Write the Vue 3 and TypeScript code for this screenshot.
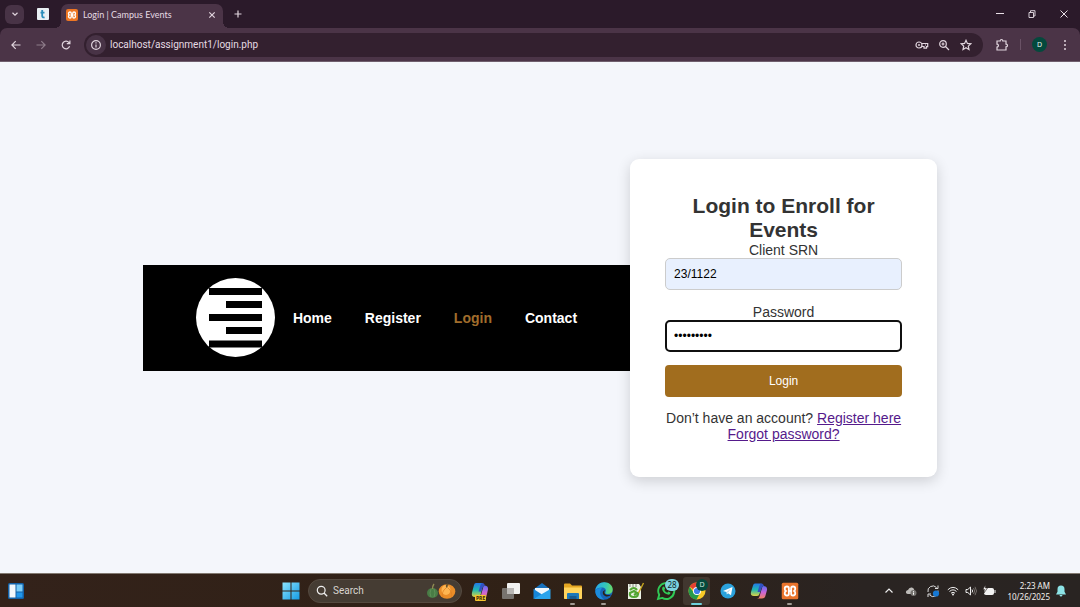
<script setup lang="ts">
import { ref } from 'vue'

interface NavItem {
  label: string
  active?: boolean
}

const navItems: NavItem[] = [
  { label: 'Home' },
  { label: 'Register' },
  { label: 'Login', active: true },
  { label: 'Contact' },
]

const address = ref('localhost/assignment1/login.php')
const srn = ref('23/1122')
const password = ref('campus123')
</script>

<template>
  <div class="screen">
    <header class="browser">
      <div class="tabstrip">
        <button class="tab-search" type="button" aria-label="Search tabs">
          <svg width="8" height="8" viewBox="0 0 8 8"><path d="M1.500 2.800 4 5.200 6.500 2.800" class="line" /></svg>
        </button>
        <button class="pinned" type="button" aria-label="Pinned tab">
          <svg width="12" height="12" viewBox="0 0 12 12">
            <rect width="12" height="12" rx="1" fill="#e9f0f4" />
            <path d="M5.200 2v6q0 1.800 2.400 1.300M3.500 4.600h4" fill="none" stroke="#2b8dbb" stroke-width="1.800" />
          </svg>
        </button>
        <div class="tab">
          <svg width="12" height="12" viewBox="0 0 24 24">
            <rect width="24" height="24" rx="4" fill="#ee7623" />
            <path d="M10.500 12V8.500Q10.500 6 8 6 5 6 5 9q0 2 1.500 3Q5 13 5 15q0 3 3 3 2.500 0 2.500-2.500zh3M13.500 12V8.500Q13.500 6 16 6q3 0 3 3 0 2-1.500 3 1.500 1 1.500 3 0 3-3 3-2.500 0-2.500-2.500z" fill="none" stroke="#fff" stroke-width="2.600" />
          </svg>
          <span class="tab-title">Login | Campus Events</span>
          <button class="tab-close" type="button" aria-label="Close tab">
            <svg width="8" height="8" viewBox="0 0 8 8"><path d="M1.300 1.300 6.700 6.700M6.700 1.300 1.300 6.700" class="line" /></svg>
          </button>
        </div>
        <button class="new-tab" type="button" aria-label="New tab">
          <svg width="10" height="10" viewBox="0 0 10 10"><path d="M5 1.500v7M1.500 5h7" class="line" /></svg>
        </button>
        <div class="window-buttons">
          <button type="button" aria-label="Minimize">
            <svg width="10" height="10" viewBox="0 0 10 10"><path d="M1 4.500h8" stroke="#e8dfe6" fill="none" /></svg>
          </button>
          <button type="button" aria-label="Restore">
            <svg width="10" height="10" viewBox="0 0 10 10"><path d="M2 3.500h4.500V8.500H2zM3.500 3.500v-1.800H8V7H6.500" stroke="#e8dfe6" stroke-width=".9" fill="none" /></svg>
          </button>
          <button type="button" aria-label="Close">
            <svg width="10" height="10" viewBox="0 0 10 10"><path d="M1.500 1.500 8.500 8.500M8.500 1.500 1.500 8.500" stroke="#e8dfe6" fill="none" /></svg>
          </button>
        </div>
      </div>

      <div class="toolbar">
        <button class="tool" type="button" aria-label="Back">
          <svg width="12" height="12" viewBox="0 0 12 12"><path d="M10.500 6H2M5.700 2.200 1.900 6l3.800 3.800" class="line" /></svg>
        </button>
        <button class="tool dim" type="button" aria-label="Forward">
          <svg width="12" height="12" viewBox="0 0 12 12"><path d="M1.500 6H10M6.300 2.200 10.100 6 6.300 9.800" class="line" /></svg>
        </button>
        <button class="tool" type="button" aria-label="Reload">
          <svg width="12" height="12" viewBox="0 0 12 12"><path d="M9.600 7.300A3.800 3.800 0 1 1 9 3.600L9.800 4.400M9.900 1.500v3.100H6.800" class="line" /></svg>
        </button>
        <div class="omnibox">
          <button class="site-info" type="button" aria-label="Site information">
            <svg width="12" height="12" viewBox="0 0 12 12"><circle cx="6" cy="6" r="4.400" class="line" /><path d="M6 5.400v3M6 3.300v1.200" class="line" /></svg>
          </button>
          <input v-model="address" class="address" type="text" aria-label="Address" />
          <button class="omni-action" type="button" aria-label="Passwords">
            <svg width="14" height="10" viewBox="0 0 14 10">
              <circle cx="4" cy="5" r="3" class="line" /><circle cx="4" cy="5" r="1" fill="#d9cbd5" />
              <path d="M6.700 3.500h6v3.200h-1.200v1.500H9V6.500H6.800M10 5h1" class="line" />
            </svg>
          </button>
          <button class="omni-action" type="button" aria-label="Zoom">
            <svg width="12" height="12" viewBox="0 0 12 12"><circle cx="5" cy="5" r="3.300" class="line" /><path d="M7.500 7.500 11 11M5 3.500v3M3.500 5h3" class="line" /></svg>
          </button>
          <button class="omni-action" type="button" aria-label="Bookmark this page">
            <svg width="12" height="12" viewBox="0 0 12 12"><path d="M6 1.300 7.400 4.400l3.400.4-2.500 2.300.7 3.400-3-1.700-3 1.700.7-3.400L1.200 4.800l3.400-.4z" class="line" /></svg>
          </button>
        </div>
        <button class="extensions" type="button" aria-label="Extensions">
          <svg width="14" height="14" viewBox="0 0 14 14"><path d="M2 3h3.200c-.1-2 2.700-2 2.600 0H11v3.200c2 0 2 2.600 0 2.600V12H2V9c1.900 0 1.900-2.800 0-2.800z" class="line" /></svg>
        </button>
        <span class="divider"></span>
        <button class="avatar" type="button" aria-label="Profile">D</button>
        <button class="kebab" type="button" aria-label="Menu">
          <svg width="4" height="12" viewBox="0 0 4 12" fill="#e0d4dd"><circle cx="2" cy="2" r="1" /><circle cx="2" cy="6" r="1" /><circle cx="2" cy="10" r="1" /></svg>
        </button>
      </div>
    </header>

    <main class="page">
      <div class="site-header">
        <svg class="logo" viewBox="0 0 79 79" role="img" aria-label="Campus Events">
          <circle cx="39.500" cy="39.500" r="39.500" fill="#fff" />
          <path d="M13 10h53v7H13zM30 23h36v7H30zM13 36h53v7H13zM30 49h36v7H30zM13 62.500h53v7H13z" fill="#000" />
        </svg>
        <nav class="nav">
          <a v-for="item in navItems" :key="item.label" href="#" :class="{ active: item.active }">{{ item.label }}</a>
        </nav>
      </div>

      <form class="card" @submit.prevent>
        <h2>Login to Enroll for Events</h2>
        <label for="srn">Client SRN</label>
        <input id="srn" v-model="srn" class="field filled" type="text" />
        <label for="password">Password</label>
        <input id="password" v-model="password" class="field focused" type="password" />
        <button class="submit" type="submit">Login</button>
        <p>Don’t have an account? <a href="#">Register here</a></p>
        <p><a href="#">Forgot password?</a></p>
      </form>
    </main>

    <footer class="taskbar">
      <div class="task-left">
        <button type="button" aria-label="Widgets">
          <svg width="18" height="18" viewBox="0 0 18 18">
            <rect x="1" y="1" width="16" height="16" rx="1.500" fill="#1261a8" />
            <path d="M2.500 2.500h6v13h-6z" fill="#f2f7fb" /><path d="M9.500 2.500h6v7h-6z" fill="#7ccdf7" /><path d="M9.500 10.500h6v5h-6z" fill="#2196ea" />
          </svg>
        </button>
      </div>

      <div class="task-center">
        <button class="app" type="button" aria-label="Start">
          <svg width="18" height="18" viewBox="0 0 18 18">
            <defs><linearGradient id="win" x1="0" y1="0" x2="1" y2="1"><stop stop-color="#8be3fd" /><stop offset="1" stop-color="#159be4" /></linearGradient></defs>
            <path d="M.5.500h8v8h-8zM9.500.500h8v8h-8zM.5 9.500h8v8h-8zM9.500 9.500h8v8h-8z" fill="url(#win)" />
          </svg>
        </button>
        <label class="search">
          <svg width="12" height="12" viewBox="0 0 12 12"><circle cx="5.200" cy="5.200" r="3.900" fill="none" stroke="#eee" stroke-width="1.200" /><path d="M8 8l3.200 3.200" stroke="#eee" stroke-width="1.300" /></svg>
          <input type="text" placeholder="Search" aria-label="Search" />
          <svg width="30" height="18" viewBox="0 0 30 18">
            <ellipse cx="6.500" cy="11" rx="5.500" ry="5" fill="#497c46" /><path d="M5 7q-2 4 0 8M8 7q2 4 0 8" stroke="#5f9058" fill="none" /><path d="M6.500 7q0-3 1.500-5" stroke="#8f8b52" stroke-width="1.400" fill="none" />
            <ellipse cx="21" cy="9.500" rx="8.300" ry="7.300" fill="#ea8d28" /><ellipse cx="20" cy="8" rx="4.500" ry="5" fill="#ffb651" /><path d="M20 6q-5 4-3 9M22 6q5 4 3 9" stroke="#dc7d20" stroke-width=".7" fill="none" /><path d="M21 5.500q-1-2 1-3.500" stroke="#68522b" stroke-width="1.600" fill="none" />
          </svg>
        </label>
        <button class="app" type="button" aria-label="Microsoft 365 Copilot">
          <svg width="18" height="18" viewBox="0 0 18 18">
            <defs>
              <linearGradient id="copA" x1="0" y1="0" x2="0" y2="1"><stop stop-color="#2378e8" /><stop offset=".5" stop-color="#20b8b0" /><stop offset="1" stop-color="#dfd344" /></linearGradient>
              <linearGradient id="copB" x1="0" y1="0" x2="0" y2="1"><stop stop-color="#5b6df2" /><stop offset=".5" stop-color="#c865da" /><stop offset="1" stop-color="#f38062" /></linearGradient>
            </defs>
            <path d="M5 1h6q1.500 0 1 2L9.500 13q-.5 2-2.500 2H4Q0 15 1 10.500L3 3q.5-2 2-2z" fill="url(#copA)" />
            <path d="M13 3.500q4.500 0 4 4L15.500 14q-.5 3-3.500 3H7q2 0 2.500-2L12 6q.4-2.500 1-2.500z" fill="url(#copB)" />
            <path d="M12 1q1.500.5 2 2.500-2 0-2.500 2L10 9.500H7.500L9.500 3q.5-2 2.500-2z" fill="#3151c4" />
          </svg>
          <span class="pre">PRE</span>
        </button>
        <button class="app" type="button" aria-label="Task view">
          <svg width="18" height="18" viewBox="0 0 18 18"><rect x="0" y="6" width="12" height="11" rx="1" fill="#77736e" /><rect x="5" y="1" width="13" height="11" rx="1" fill="#f2f2f0" /><path d="M5 6h7v6H5z" fill="#b9b7b4" /></svg>
        </button>
        <button class="app" type="button" aria-label="Mail">
          <svg width="18" height="18" viewBox="0 0 18 18"><path d="M1 7 9 1l8 6v9H1z" fill="#1671bd" /><path d="M2 6h14v5l-7 3-7-3z" fill="#eff8fd" /><path d="M.5 7 9 12.500.500 17z" fill="#1686d8" /><path d="M17.500 7 5.500 14 .500 17h17z" fill="#2aa4ec" /></svg>
        </button>
        <button class="app running" type="button" aria-label="File Explorer">
          <svg width="18" height="18" viewBox="0 0 18 18"><path d="M0 2.500Q0 1.500 1 1.500h5l2 2h9q1 0 1 1v12H0z" fill="#e4a622" /><path d="M0 5.500h18v10.500q0 1-1 1H1q-1 0-1-1z" fill="#ffd45c" /><path d="M3 12q0-1 1-1h10q1 0 1 1v5H3z" fill="#1d78b9" /><path d="M5.500 14h7v3h-7z" fill="#175a90" /></svg>
        </button>
        <button class="app running" type="button" aria-label="Edge">
          <svg width="18" height="18" viewBox="0 0 18 18">
            <defs><linearGradient id="edge" x1="0" y1=".4" x2="1" y2=".5"><stop stop-color="#28a9e8" /><stop offset=".6" stop-color="#35c7b5" /><stop offset="1" stop-color="#6cdb62" /></linearGradient></defs>
            <circle cx="9" cy="9" r="8.700" fill="#1665b8" />
            <path d="M.3 8.500C1 3.500 4.700.300 9.300.300c5 0 8.400 3.400 8.400 7.200 0 3-2.200 4.500-4.700 4.500-1.800 0-3.200-.6-2.600-1.600C12 7.500 9.500 5.500 7 5.500 4 5.500 1 6.500.300 8.500z" fill="url(#edge)" />
            <path d="M7 6.500c-3 2.500-2.500 8 2.200 10.900C4 18 .300 14 .300 9 1 6.500 5 5.500 7 6.500z" fill="#1c8cdd" />
            <path d="M10.300 8.200C8 10 10 14.500 16 12.700c-3 3.300-8.500 1.300-8.200-2.300.1-1.300 1.300-2.400 2.500-2.200z" fill="#2d2016" />
          </svg>
        </button>
        <button class="app" type="button" aria-label="Notepad++">
          <svg width="18" height="18" viewBox="0 0 18 18"><path d="M2 2h11l2 3v12H2z" fill="#edf2e5" /><path d="M4 2v3M7 2v3M10 2v3" stroke="#858780" /><path d="M4 8q4-4 7 0M12 10q1 5-4 5-5 0-4-4l4-2 3 2-3 2" fill="none" stroke="#52a532" stroke-width="2.200" /><path d="m17.500 1-5 10" stroke="#c6a31d" stroke-width="1.400" /></svg>
        </button>
        <button class="app" type="button" aria-label="WhatsApp">
          <svg width="20" height="20" viewBox="0 0 20 20"><path d="M2 18 3.200 13.800A8 8 0 1 1 6.200 16.900z" fill="#2a2118" stroke="#30ca56" stroke-width="1.900" /><path d="M6.700 6q1-1 1.800.3l.6 1.400-.8 1.200q1 2 3 2.800l1-1.100 2.100 1q.3 1.800-1.800 2.100-5.300-.7-6.500-5.400 0-1.500.6-2.300z" fill="#30ca56" /></svg>
          <span class="count">28</span>
        </button>
        <button class="app current" type="button" aria-label="Chrome">
          <svg width="18" height="18" viewBox="0 0 18 18">
            <circle cx="9" cy="9" r="8.500" fill="#f8c927" /><path d="M9 9 1.600 4.800A8.500 8.500 0 0 1 16.400 4.800z" fill="#e34133" /><path d="M1.600 4.800A8.500 8.500 0 0 0 8.500 17.500L12 11 6 11z" fill="#279b4b" /><path d="M9 5h7.500l-.5-1.200L3 3.200 5.500 9z" fill="#e34133" /><circle cx="9" cy="9" r="4" fill="#fff" /><circle cx="9" cy="9" r="3.100" fill="#3d7de8" />
          </svg>
          <span class="profile">D</span>
        </button>
        <button class="app" type="button" aria-label="Telegram">
          <svg width="16" height="16" viewBox="0 0 16 16"><circle cx="8" cy="8" r="7.500" fill="#2ba2dc" /><path d="M3 8 12.500 4 11 12.300 8 10.200 6.800 11.500 6.500 9z" fill="#fff" /><path d="m6.500 9 4.500-3.500-3 4.200" fill="#b9d9ea" /></svg>
        </button>
        <button class="app" type="button" aria-label="Copilot">
          <svg width="18" height="18" viewBox="0 0 18 18">
            <path d="M5 1.500h6q1.500 0 1 2L9.500 12q-.5 2-2.500 2H4Q0 14 1 10L3 3.500q.5-2 2-2z" fill="url(#copA)" />
            <path d="M13 4q4.500 0 4 4L15.500 13.500q-.5 3-3.500 3H7q2 0 2.500-2L12 6q.4-2 1-2z" fill="url(#copB)" />
            <path d="M12 1.500q1.500.5 2 2.500-2 0-2.500 2L10 10H7.500L9.500 3.500q.5-2 2.500-2z" fill="#3151c4" />
          </svg>
        </button>
        <button class="app running" type="button" aria-label="XAMPP">
          <svg width="18" height="18" viewBox="0 0 24 24">
            <rect x="1" y="1" width="22" height="22" rx="2" fill="#e9742c" />
            <path d="M10.500 12V8.500Q10.500 6 8 6 5 6 5 9q0 2 1.500 3Q5 13 5 15q0 3 3 3 2.500 0 2.500-2.500zh3M13.500 12V8.500Q13.500 6 16 6q3 0 3 3 0 2-1.500 3 1.500 1 1.500 3 0 3-3 3-2.500 0-2.500-2.500z" fill="none" stroke="#fff" stroke-width="2.400" />
          </svg>
        </button>
      </div>

      <div class="task-right">
        <button class="tray wide" type="button" aria-label="Show hidden icons">
          <svg width="10" height="10" viewBox="0 0 10 10"><path d="M1.500 6.500 5 3l3.500 3.500" fill="none" stroke="#eee" stroke-width="1.200" /></svg>
        </button>
        <button class="tray wide" type="button" aria-label="OneDrive">
          <svg width="12" height="12" viewBox="0 0 12 12"><path d="M3 9Q.500 8.500 1 6.500q.500-1.500 2-1.500 1-3 4-2.500 2 .5 2.500 3L8 9z" fill="#bdbbb8" /><circle cx="8.500" cy="8" r="3" fill="#777470" /><path d="M8.500 7.500v2.200M8.500 6v.8" stroke="#fff" /></svg>
        </button>
        <button class="tray wide" type="button" aria-label="Update">
          <svg width="14" height="14" viewBox="0 0 14 14"><path d="M2 8A5 5 0 0 1 10.500 3.500M12 1.500v3H9M12 6.500A5 5 0 0 1 3.500 11M2 13v-3h3" fill="none" stroke="#ddd" /><circle cx="10" cy="9.500" r="3.100" fill="#1678d4" /></svg>
        </button>
        <button class="tray" type="button" aria-label="Wi-Fi">
          <svg width="12" height="12" viewBox="0 0 12 12"><path d="M.8 4.800Q6-.1 11.200 4.800M2.500 6.500Q6 3.200 9.500 6.500M4 8.200Q6 6.400 8 8.200" fill="none" stroke="#eee" /><circle cx="6" cy="9.500" r="1" fill="#eee" /></svg>
        </button>
        <button class="tray" type="button" aria-label="Volume">
          <svg width="12" height="12" viewBox="0 0 12 12"><path d="M1 4.500h1.800L5.500 2v8L2.800 7.500H1z" fill="none" stroke="#eee" /><path d="M7 4.500q1.200 1.500 0 3" fill="none" stroke="#eee" /><path d="M8.500 3q2.300 3 0 6M10 1.800q3 4.200 0 8.400" fill="none" stroke="#86817d" stroke-width=".8" /></svg>
        </button>
        <button class="tray" type="button" aria-label="Battery">
          <svg width="14" height="12" viewBox="0 0 14 12"><rect x="2.500" y="3.500" width="9" height="6" rx="1" fill="#f2f2f2" stroke="#f2f2f2" /><path d="M13 5v3" stroke="#f2f2f2" /><path d="M3.500 0 .800 4.500h2L2 8l3.500-5h-2z" fill="#f2f2f2" stroke="#2c2522" stroke-width=".6" /></svg>
        </button>
        <button class="clock" type="button"><span>2:23 AM</span><span>10/26/2025</span></button>
        <button class="bell" type="button" aria-label="Notifications">
          <svg width="10" height="12" viewBox="0 0 10 12"><path d="M5 .500q3.500 0 3.500 3.700v2.600L10 9.500H0l1.500-2.700V4.200Q1.500.500 5 .500zM3.500 10h3q-.3 1.500-1.500 1.500T3.500 10z" fill="#8ce3e6" /></svg>
        </button>
      </div>
    </footer>
  </div>
</template>

<style>
body {
  background: #f4f6fb;
}
</style>

<style scoped>
.screen {
  min-height: 100vh;
  display: flex;
  flex-direction: column;
  font-family: 'Liberation Sans', Arial, sans-serif;
}

.screen *,
.screen *::before,
.screen *::after {
  box-sizing: border-box;
}

button {
  margin: 0;
  padding: 0;
  border: 0;
  background: none;
  color: inherit;
  font: inherit;
}

svg {
  display: block;
  flex: none;
}

.line {
  fill: none;
  stroke: #e0d4dd;
  stroke-width: 1.2;
}

/* Browser frame */
.browser {
  background: #2b1a2a;
  color: #e5dbe3;
  font-family: 'Noto Sans', 'Open Sans', sans-serif;
}

.browser button,
.taskbar button {
  display: flex;
  align-items: center;
  justify-content: center;
}

.tabstrip {
  display: flex;
  align-items: center;
  height: 28px;
  padding-left: 5px;
}

.tab-search {
  width: 19px;
  height: 19px;
  border-radius: 6px;
  background: #483346;
}

.pinned {
  width: 37px;
}

.tab {
  position: relative;
  align-self: flex-end;
  display: flex;
  align-items: center;
  gap: 5px;
  width: 162px;
  height: 24px;
  padding: 0 4px 3px 5px;
  border-radius: 7px 7px 0 0;
  background: #4b3447;
  font-family: Lato, sans-serif;
  font-size: 9px;
}

.tab::before,
.tab::after {
  content: '';
  position: absolute;
  bottom: 0;
  width: 6px;
  height: 6px;
}

.tab::before {
  right: 100%;
  background: radial-gradient(circle at 0 0, transparent 6px, #4b3447 6px);
}

.tab::after {
  left: 100%;
  background: radial-gradient(circle at 100% 0, transparent 6px, #4b3447 6px);
}

.tab-title {
  flex: 1;
  white-space: nowrap;
}

.tab-close {
  width: 14px;
  height: 14px;
}

.new-tab {
  width: 20px;
  height: 20px;
  margin-left: 5px;
}

.window-buttons {
  display: flex;
  margin-left: auto;
}

.window-buttons button {
  width: 32px;
  height: 28px;
}

.toolbar {
  display: flex;
  align-items: center;
  height: 34px;
  padding: 0 5px 0 3px;
  border-bottom: 1px solid #6f5f6d;
  border-radius: 7px 7px 0 0;
  background: #4b3447;
}

.tool {
  width: 25px;
  height: 25px;
}

.dim {
  opacity: 0.45;
}

.omnibox {
  flex: 1;
  display: flex;
  align-items: center;
  height: 24px;
  margin-left: 6px;
  padding: 0 6px 0 2px;
  border-radius: 12px;
  background: #33202f;
}

.site-info {
  width: 20px;
  height: 20px;
  border-radius: 50%;
  background: #483346;
}

.address {
  flex: 1;
  min-width: 0;
  padding: 0 4px;
  border: 0;
  outline: 0;
  background: none;
  color: #e5dbe3;
  font: 10px Roboto, sans-serif;
}

.omni-action {
  width: 22px;
  height: 22px;
}

.extensions {
  width: 26px;
  height: 26px;
  margin-left: 6px;
}

.divider {
  width: 1px;
  height: 11px;
  margin: 0 11px 0 5px;
  background: #6a5266;
}

.browser .avatar {
  width: 15px;
  height: 15px;
  border-radius: 50%;
  background: #04493d;
  color: #e4f0ed;
  font-size: 7px;
}

.kebab {
  width: 20px;
  height: 20px;
  margin-left: 8px;
}

/* Page */
.page {
  flex: 1;
  display: flex;
  align-items: center;
  justify-content: center;
  background: #f4f6fb;
  color: #333;
}

.site-header {
  display: flex;
  align-items: center;
  gap: 18px;
  min-height: 106px;
  padding: 13px 53px;
  background: #000;
}

.logo {
  width: 79px;
  height: 79px;
}

.nav {
  display: flex;
  gap: 33px;
}

.nav a {
  color: #fff;
  font-size: 14px;
  font-weight: bold;
  text-decoration: none;
}

.nav a.active {
  color: #a06d2c;
}

.card {
  display: flex;
  flex-direction: column;
  width: 307px;
  padding: 35px;
  border-radius: 9px;
  background: #fff;
  box-shadow: 0 4px 14px rgba(0, 0, 0, 0.16);
  font-size: 14px;
  line-height: 16px;
  text-align: center;
}

.card h2 {
  margin: 0;
  font-size: 21px;
  line-height: 24px;
}

.field {
  height: 32px;
  margin-bottom: 14px;
  padding: 0 8px;
  border: 1px solid #ccc;
  border-radius: 5px;
  outline: 0;
  background: #fff;
  color: #000;
  font: 12px 'Liberation Sans', Arial, sans-serif;
}

.filled {
  background: #e8f0fe;
}

.focused {
  margin-bottom: 13px;
  padding: 0 7px;
  border: 2px solid #101010;
}

.submit {
  height: 32px;
  margin-bottom: 13px;
  border-radius: 4px;
  background: #a16d1e;
  color: #fff;
  font-size: 12px;
}

.card p {
  margin: 0;
  white-space: nowrap;
}

.card a {
  color: #551a8b;
}

/* Taskbar */
.taskbar {
  display: grid;
  grid-template-columns: 1fr auto 1fr;
  align-items: center;
  height: 34px;
  border-top: 1px solid #827971;
  background: linear-gradient(90deg, #33221a, #302116 50%, #2a2422 80%, #292422);
  color: #f2f0ee;
  font-family: 'Noto Sans', 'Open Sans', sans-serif;
}

.task-left {
  padding-left: 7px;
}

.task-center {
  display: flex;
  align-items: center;
}

.app {
  position: relative;
  width: 31px;
  height: 32px;
}

.search {
  display: flex;
  align-items: center;
  width: 154px;
  height: 24px;
  margin: 0 2px;
  padding: 0 5px 0 7px;
  border: 1px solid #554a40;
  border-radius: 12px;
  background: #453c33;
}

.search input {
  flex: 1;
  min-width: 0;
  padding: 0 5px;
  border: 0;
  outline: 0;
  background: none;
  color: #e0dcd8;
  font: 10px Roboto, sans-serif;
}

.search input::placeholder {
  color: #d8d4cf;
}

.running::after,
.current::after {
  content: '';
  position: absolute;
  bottom: 2px;
  left: 13px;
  width: 5px;
  height: 2px;
  border-radius: 1px;
  background: #a19b94;
}

.current {
  z-index: 1;
}

.current::before {
  content: '';
  position: absolute;
  inset: 2px;
  z-index: -1;
  border-radius: 3px;
  background: #41372f;
}

.current::after {
  left: 10px;
  width: 11px;
  background: #6fd0dc;
}

.pre {
  position: absolute;
  left: 11px;
  bottom: 6px;
  padding: 0 1px;
  border-radius: 1px;
  background: #f6c52d;
  color: #33260b;
  font-size: 5px;
  font-weight: bold;
  line-height: 6px;
}

.count,
.profile {
  position: absolute;
  display: grid;
  place-items: center;
  border-radius: 6px;
}

.count {
  top: 4px;
  right: 2px;
  width: 14px;
  height: 12px;
  background: #7cd3df;
  color: #10262b;
  font-size: 8px;
}

.profile {
  top: 4px;
  right: 4px;
  width: 12px;
  height: 12px;
  background: #04493d;
  color: #cfe3de;
  font-size: 7px;
}

.task-right {
  display: flex;
  align-items: center;
  justify-content: flex-end;
  padding-right: 11px;
}

.tray {
  width: 18px;
  height: 28px;
}

.wide {
  width: 22px;
}

.taskbar .clock {
  flex-direction: column;
  align-items: flex-end;
  margin-left: 9px;
  font-size: 8px;
  line-height: 11px;
}

.bell {
  width: 16px;
  height: 28px;
  margin-left: 3px;
}
</style>
